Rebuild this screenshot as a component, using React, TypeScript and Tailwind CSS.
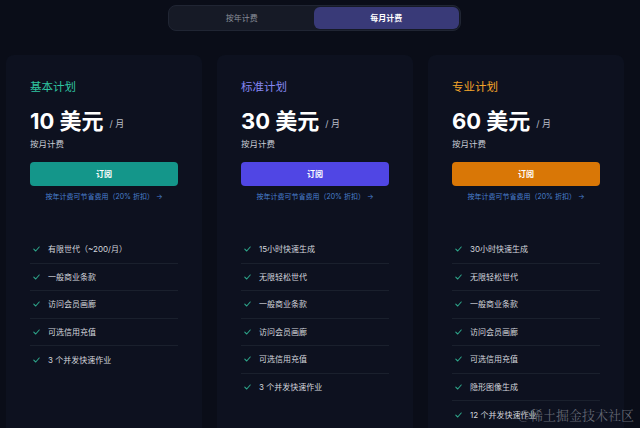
import React from 'react'

interface Plan {
    name: string;
    price: string;
    titleColor: string;
    buttonColor: string;
    features: string[];
}

const plans: Plan[] = [
    {
        name: '基本计划',
        price: '10',
        titleColor: 'text-[#2fc3a0]',
        buttonColor: 'bg-[#14968a]',
        features: ['有限世代（~200/月）', '一般商业条款', '访问会员画廊', '可选信用充值', '3 个并发快速作业'],
    },
    {
        name: '标准计划',
        price: '30',
        titleColor: 'text-[#8487f2]',
        buttonColor: 'bg-[#5046e4]',
        features: ['15小时快速生成', '无限轻松世代', '一般商业条款', '访问会员画廊', '可选信用充值', '3 个并发快速作业'],
    },
    {
        name: '专业计划',
        price: '60',
        titleColor: 'text-[#f2a42a]',
        buttonColor: 'bg-[#d97706]',
        features: ['30小时快速生成', '无限轻松世代', '一般商业条款', '访问会员画廊', '可选信用充值', '隐形图像生成', '12 个并发快速作业'],
    },
]

function Check() {
    return (
        <svg width="7" height="6" viewBox="0 0 7 6" fill="none" className="shrink-0">
            <path d="M0.8 3.2 L2.7 5 L6.2 1" stroke="#2ea58a" strokeWidth="1.1" strokeLinecap="round" strokeLinejoin="round" />
        </svg>
    )
}

function PlanCard({ plan }: { plan: Plan }) {
    return (
        <div className="w-[196px] h-[400px] shrink-0 rounded-lg bg-[#0d111f] px-6 pt-6">
            <div className={`text-[11.5px] leading-4 ${plan.titleColor}`}>{plan.name}</div>
            <div className="mt-3 flex items-end h-[28px]">
                <span className="text-[22px] leading-[28px] font-bold text-white">{plan.price} 美元</span>
                <span className="ml-1.5 mb-[5px] text-[9px] leading-3 text-[#b8bcc6]">/ 月</span>
            </div>
            <div className="mt-[3px] text-[8.5px] leading-3 text-[#c9ccd4]">按月计费</div>
            <button className={`mt-3 w-full h-6 rounded ${plan.buttonColor} text-[8px] font-bold text-white`}>订阅</button>
            <div className="mt-[6px] text-center text-[7px] leading-[10px] text-[#4a80d0]">按年计费可节省费用（20% 折扣） →</div>
            <div className="mt-[34px]">
                {plan.features.map((f, i) => (
                    <div
                        key={i}
                        className={`flex items-center gap-2 h-[27.5px] pl-[3px] ${i < plan.features.length - 1 ? 'border-b border-[#1a202d]' : ''}`}
                    >
                        <Check />
                        <span className="text-[8px] leading-3 text-[#d3d6dd]">{f}</span>
                    </div>
                ))}
            </div>
        </div>
    )
}

export default function App() {
    return (
        <div className="relative w-[640px] h-[428px] overflow-hidden bg-[#0a0d18]" style={{ fontFamily: 'Inter, "Noto Sans CJK SC", sans-serif' }}>
            <div className="flex justify-center pt-[5px] pr-3">
                <div className="flex w-[293px] h-[26px] rounded-lg bg-[#161a26] border border-[#202533] p-[1px]">
                    <button className="flex-1 text-[8px] text-[#8a8e99]">按年计费</button>
                    <button className="flex-1 rounded-md bg-[#393a78] text-[8px] font-bold text-white">每月计费</button>
                </div>
            </div>
            <div className="mt-6 flex gap-[15px] pl-[6px]">
                {plans.map((p) => (
                    <PlanCard key={p.name} plan={p} />
                ))}
            </div>
            <div
                className="absolute right-[6px] bottom-[4px] text-[13px] text-[#8a8e99]/70"
                style={{ fontFamily: '"Noto Serif CJK SC", "Noto Sans CJK SC", serif' }}
            >
                @稀土掘金技术社区
            </div>
        </div>
    )
}
